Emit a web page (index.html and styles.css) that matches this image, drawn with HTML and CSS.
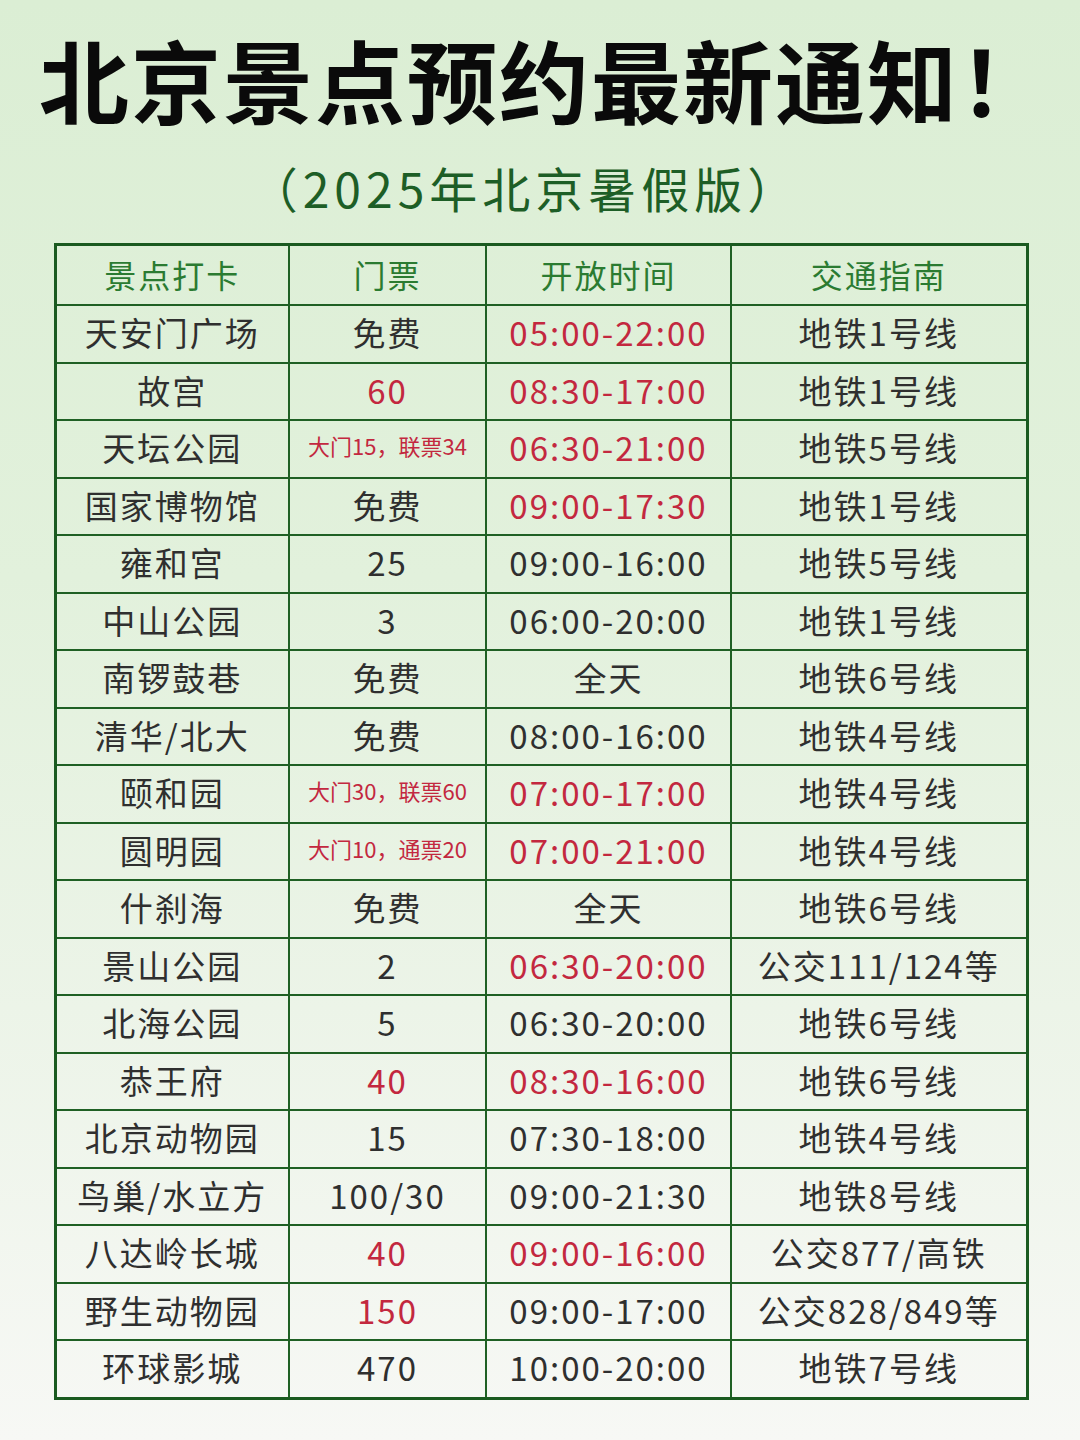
FILE: index.html
```html
<!DOCTYPE html>
<html lang="zh-CN">
<head>
<meta charset="utf-8">
<title>北京景点预约最新通知</title>
<link rel="stylesheet" href="styles.css">
</head>
<body>
<div class="page">
  <h1 class="title">北京景点预约最新通知！</h1>
  <div class="subtitle">（2025年北京暑假版）</div>
  <table class="grid">
    <colgroup>
      <col class="c1"><col class="c2"><col class="c3"><col class="c4">
    </colgroup>
    <thead>
      <tr><th>景点打卡</th><th>门票</th><th>开放时间</th><th>交通指南</th></tr>
    </thead>
    <tbody>
      <tr><td>天安门广场</td><td>免费</td><td class="red">05:00-22:00</td><td>地铁1号线</td></tr>
      <tr><td>故宫</td><td class="red">60</td><td class="red">08:30-17:00</td><td>地铁1号线</td></tr>
      <tr><td>天坛公园</td><td class="red small"><span>大门15，联票34</span></td><td class="red">06:30-21:00</td><td>地铁5号线</td></tr>
      <tr><td>国家博物馆</td><td>免费</td><td class="red">09:00-17:30</td><td>地铁1号线</td></tr>
      <tr><td>雍和宫</td><td>25</td><td>09:00-16:00</td><td>地铁5号线</td></tr>
      <tr><td>中山公园</td><td>3</td><td>06:00-20:00</td><td>地铁1号线</td></tr>
      <tr><td>南锣鼓巷</td><td>免费</td><td>全天</td><td>地铁6号线</td></tr>
      <tr><td>清华/北大</td><td>免费</td><td>08:00-16:00</td><td>地铁4号线</td></tr>
      <tr><td>颐和园</td><td class="red small"><span>大门30，联票60</span></td><td class="red">07:00-17:00</td><td>地铁4号线</td></tr>
      <tr><td>圆明园</td><td class="red small"><span>大门10，通票20</span></td><td class="red">07:00-21:00</td><td>地铁4号线</td></tr>
      <tr><td>什刹海</td><td>免费</td><td>全天</td><td>地铁6号线</td></tr>
      <tr><td>景山公园</td><td>2</td><td class="red">06:30-20:00</td><td>公交111/124等</td></tr>
      <tr><td>北海公园</td><td>5</td><td>06:30-20:00</td><td>地铁6号线</td></tr>
      <tr><td>恭王府</td><td class="red">40</td><td class="red">08:30-16:00</td><td>地铁6号线</td></tr>
      <tr><td>北京动物园</td><td>15</td><td>07:30-18:00</td><td>地铁4号线</td></tr>
      <tr><td>鸟巢/水立方</td><td>100/30</td><td>09:00-21:30</td><td>地铁8号线</td></tr>
      <tr><td>八达岭长城</td><td class="red">40</td><td class="red">09:00-16:00</td><td>公交877/高铁</td></tr>
      <tr><td>野生动物园</td><td class="red">150</td><td>09:00-17:00</td><td>公交828/849等</td></tr>
      <tr><td>环球影城</td><td>470</td><td>10:00-20:00</td><td>地铁7号线</td></tr>
    </tbody>
  </table>
</div>
</body>
</html>
```

FILE: styles.css
```css
html, body {
  margin: 0;
  padding: 0;
}
body {
  width: 1080px;
  height: 1440px;
  background: linear-gradient(180deg, #dbeed4 0%, #e2f1dc 40%, #ecf4e8 70%, #f7f8f5 100%);
  font-family: "Noto Sans CJK SC", "Noto Sans", sans-serif;
  overflow: hidden;
}
.page {
  display: flex;
  flex-direction: column;
  align-items: center;
}
.title {
  margin: 18px 0 0 10px;
  font-size: 90px;
  line-height: 120px;
  font-weight: 700;
  color: #0a0a0a;
  letter-spacing: 2px;
}
.subtitle {
  margin: 17px 30px 0 0;
  font-size: 48px;
  line-height: 64px;
  color: #1d5e26;
  letter-spacing: 5px;
}
.grid {
  margin: 24px 0 0 2px;
  border-collapse: collapse;
  border: 3px solid #1a5a20;
  width: 972px;
  table-layout: fixed;
}
.c1 { width: 234px; }
.c2 { width: 197px; }
.c3 { width: 245px; }
.c4 { width: 296px; }
.grid th, .grid td {
  border: 2px solid #1f6024;
  padding: 0;
  text-align: center;
  vertical-align: middle;
  font-weight: 400;
  white-space: nowrap;
}
.grid th {
  height: 55px;
  padding-bottom: 3px;
  line-height: 40px;
  font-size: 32px;
  color: #2b7b31;
  letter-spacing: 2px;
}
.grid td {
  height: 52.5px;
  padding-bottom: 3px;
  line-height: 40px;
  font-size: 33px;
  color: #2f2f2f;
  letter-spacing: 2px;
}
.grid td.red {
  color: #c3283f;
}
.grid td.small {
  letter-spacing: 0;
}
.grid td.small span {
  display: block;
  font-size: 22px;
  line-height: 30px;
  margin-top: -4px;
}
```
